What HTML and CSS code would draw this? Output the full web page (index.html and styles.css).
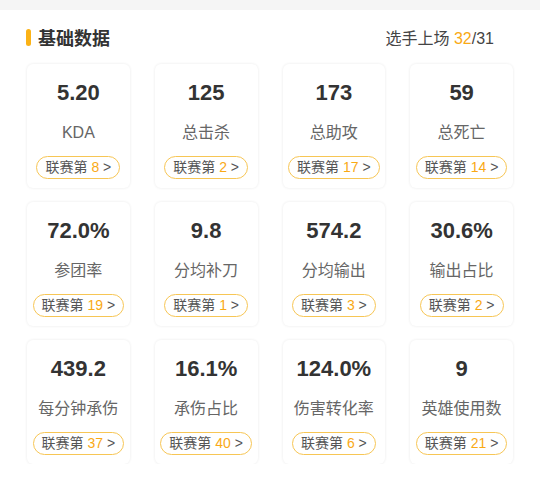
FILE: index.html
```html
<!DOCTYPE html>
<html lang="zh">

<head>
    <meta charset="UTF-8">
    <meta name="viewport" content="width=device-width, initial-scale=1.0">
    <title>基础数据</title>
    <link rel="stylesheet" href="styles.css">
</head>

<body>
    <div class="topbar"></div>
    <div class="section">
        <div class="sec-head">
            <p class="sec-title"><span class="sec-mark"></span>基础数据</p>
            <p class="sec-count">选手上场 <span class="hl">32</span>/31</p>
        </div>
        <div class="stat-grid">
            <div class="stat-card">
                <p class="stat-num">5.20</p>
                <p class="stat-name">KDA</p>
                <span class="rank">联赛第 <span class="hl">8</span> &gt;</span>
            </div>
            <div class="stat-card">
                <p class="stat-num">125</p>
                <p class="stat-name">总击杀</p>
                <span class="rank">联赛第 <span class="hl">2</span> &gt;</span>
            </div>
            <div class="stat-card">
                <p class="stat-num">173</p>
                <p class="stat-name">总助攻</p>
                <span class="rank">联赛第 <span class="hl">17</span> &gt;</span>
            </div>
            <div class="stat-card">
                <p class="stat-num">59</p>
                <p class="stat-name">总死亡</p>
                <span class="rank">联赛第 <span class="hl">14</span> &gt;</span>
            </div>
            <div class="stat-card">
                <p class="stat-num">72.0%</p>
                <p class="stat-name">参团率</p>
                <span class="rank">联赛第 <span class="hl">19</span> &gt;</span>
            </div>
            <div class="stat-card">
                <p class="stat-num">9.8</p>
                <p class="stat-name">分均补刀</p>
                <span class="rank">联赛第 <span class="hl">1</span> &gt;</span>
            </div>
            <div class="stat-card">
                <p class="stat-num">574.2</p>
                <p class="stat-name">分均输出</p>
                <span class="rank">联赛第 <span class="hl">3</span> &gt;</span>
            </div>
            <div class="stat-card">
                <p class="stat-num">30.6%</p>
                <p class="stat-name">输出占比</p>
                <span class="rank">联赛第 <span class="hl">2</span> &gt;</span>
            </div>
            <div class="stat-card">
                <p class="stat-num">439.2</p>
                <p class="stat-name">每分钟承伤</p>
                <span class="rank">联赛第 <span class="hl">37</span> &gt;</span>
            </div>
            <div class="stat-card">
                <p class="stat-num">16.1%</p>
                <p class="stat-name">承伤占比</p>
                <span class="rank">联赛第 <span class="hl">40</span> &gt;</span>
            </div>
            <div class="stat-card">
                <p class="stat-num">124.0%</p>
                <p class="stat-name">伤害转化率</p>
                <span class="rank">联赛第 <span class="hl">6</span> &gt;</span>
            </div>
            <div class="stat-card">
                <p class="stat-num">9</p>
                <p class="stat-name">英雄使用数</p>
                <span class="rank">联赛第 <span class="hl">21</span> &gt;</span>
            </div>
        </div>
    </div>
</body>

</html>
```

FILE: styles.css
```css
body {
    margin: 0;
    background-color: #fff;
    font-family: 'Liberation Sans', 'Noto Sans CJK SC', sans-serif;
    color: #333;
}

p {
    margin: 0;
}

.topbar {
    height: 10px;
    background-color: #f5f5f5;
}

.section {
    padding: 0 27px;
}

.sec-head {
    display: flex;
    justify-content: space-between;
    align-items: center;
    height: 54px;
}

.sec-title {
    display: flex;
    align-items: center;
    font-size: 18px;
    font-weight: bold;
    color: #333;
}

.sec-mark {
    width: 5px;
    height: 17px;
    margin: 0 7px 0 -1px;
    border-radius: 3px;
    background-color: #fbb216;
}

.sec-count {
    font-size: 16px;
    color: #444;
    padding-right: 19px;
}

.hl {
    color: #f9a915;
}

/* 数据卡片 */
.stat-grid {
    display: grid;
    grid-template-columns: repeat(4, 1fr);
    column-gap: 25px;
    row-gap: 14px;
}

.stat-card {
    display: flex;
    flex-direction: column;
    align-items: center;
    height: 124px;
    border-radius: 6px;
    background-color: #fff;
    box-shadow: 0 0 3px rgba(0, 0, 0, 0.09);
    box-sizing: border-box;
    padding-top: 16px;
}

.stat-num {
    font-size: 22px;
    font-weight: bold;
    color: #333;
    line-height: 25px;
}

.stat-name {
    margin-top: 18px;
    font-size: 16px;
    color: #666;
    line-height: 20px;
}

.rank {
    margin-top: 13px;
    height: 23px;
    line-height: 21px;
    padding: 0 8px;
    box-sizing: border-box;
    border: 1px solid #f7c655;
    border-radius: 12px;
    font-size: 14px;
    color: #555;
    white-space: nowrap;
}
```
